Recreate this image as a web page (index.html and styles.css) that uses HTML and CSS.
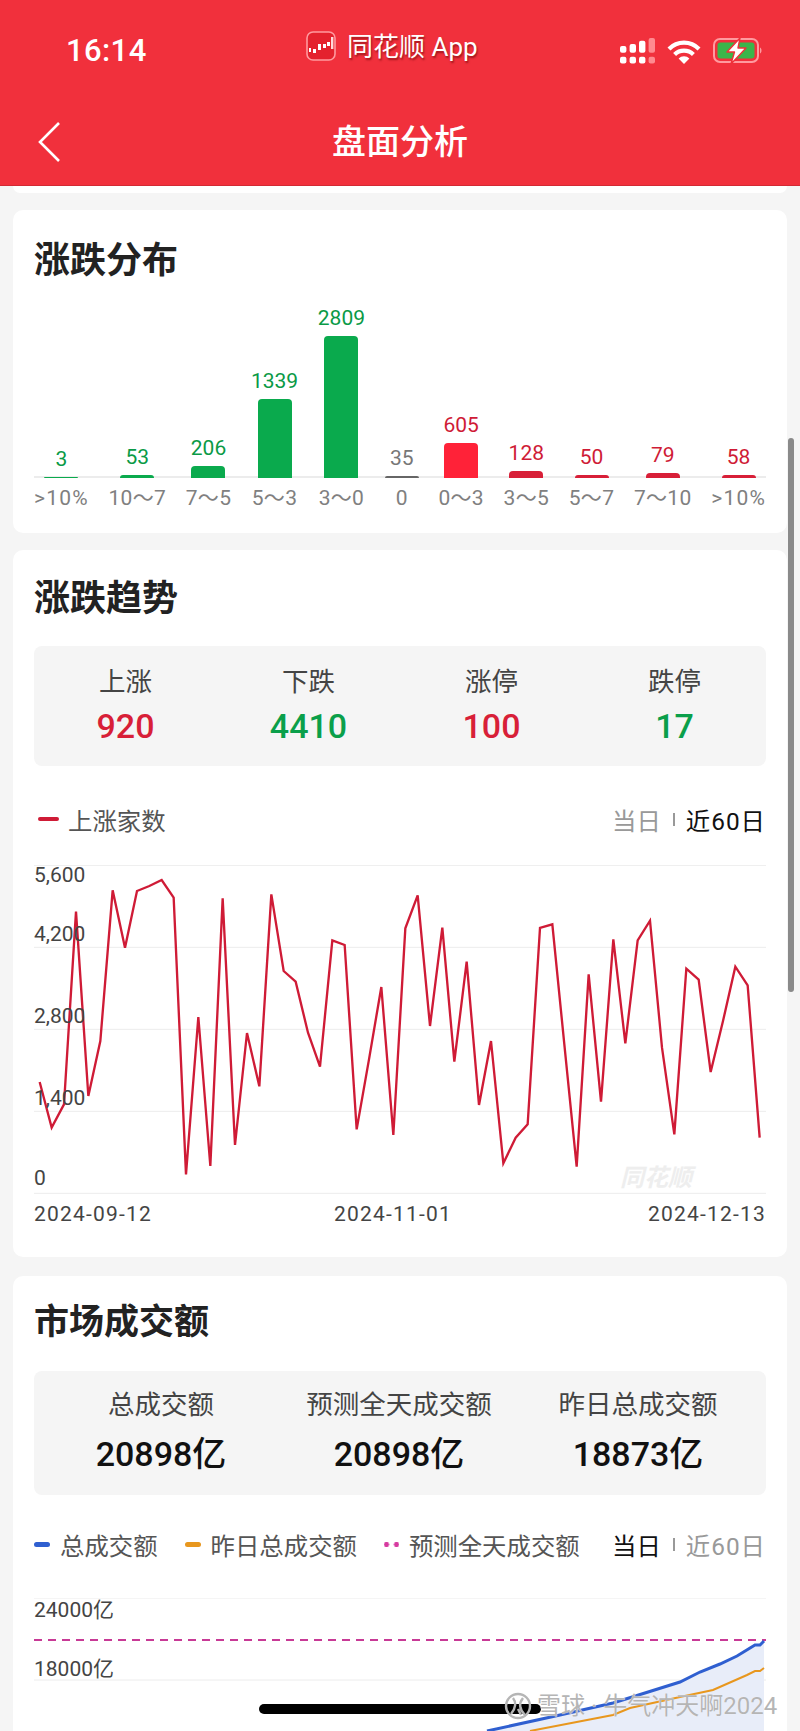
FILE: index.html
```html
<!DOCTYPE html>
<html lang="zh">
<head>
<meta charset="utf-8">
<title>盘面分析</title>
<link rel="stylesheet" href="styles.css">
</head>
<body>
<div class="phone">
  <header class="header">
    <div class="status">
      <div class="time">16:14</div>
      <div class="app">
        <svg class="app-icon" viewBox="0 0 30 30">
          <rect x="1" y="1" width="28" height="28" rx="6" fill="#e4222e" stroke="#ff9a9f" stroke-width="1.6"/>
          <g fill="#fff"><rect x="3" y="17" width="2" height="4"/><rect x="7" y="18" width="3" height="4"/><rect x="12" y="13" width="3" height="6"/><rect x="17" y="13" width="3" height="4"/><rect x="21" y="11" width="3" height="4"/></g>
          <rect x="25" y="6" width="2.4" height="12" fill="#ffd9da"/>
        </svg>
        <span class="app-name">同花顺 App</span>
      </div>
      <div class="status-icons">
        <svg class="signal" width="35" height="26" viewBox="0 0 35 26">
          <g fill="#fff">
            <rect x="0" y="8" width="6.4" height="6.8" rx="2"/><rect x="9.6" y="6" width="6.4" height="8.8" rx="2"/><rect x="19" y="2.7" width="6.4" height="12" rx="2"/>
            <rect x="0" y="18.7" width="6.4" height="6.8" rx="2"/><rect x="9.6" y="18.7" width="6.4" height="6.8" rx="2"/><rect x="19" y="18.7" width="6.4" height="6.8" rx="2"/>
          </g>
          <g fill="#ff8a90"><rect x="28.6" y="0" width="6.4" height="14.8" rx="2"/><rect x="28.6" y="18.7" width="6.4" height="6.8" rx="2"/></g>
        </svg>
        <svg class="wifi" width="34" height="25" viewBox="0 0 34 25">
          <g fill="none" stroke="#fff" stroke-width="4.2"><path d="M2 10A21 21 0 0 1 32 10"/><path d="M7.6 15.4A13.4 13.4 0 0 1 26.4 15.4"/></g>
          <path d="M11.6 19.4A7.6 7.6 0 0 1 22.4 19.4L17 25Z" fill="#fff"/>
        </svg>
        <svg class="battery" width="50" height="26" viewBox="0 0 50 26">
          <rect x="1" y="1" width="44" height="23" rx="6" fill="none" stroke="#ff9a9f" stroke-width="2"/>
          <rect x="4.5" y="4.5" width="37" height="16" rx="3" fill="#3bb54a"/>
          <path d="M47 9.5C49 10.5 49 14.5 47 15.5Z" fill="#ff9a9f"/>
          <path d="M27 0L14 14H21.5L18 26L33 10H25Z" fill="#fff" stroke="#ef3039" stroke-width="1.4" stroke-linejoin="round"/>
        </svg>
      </div>
    </div>
    <nav class="nav">
      <svg class="back" width="22" height="40" viewBox="0 0 22 40"><path d="M21 1L2 20L21 39" fill="none" stroke="#fff" stroke-width="2.6"/></svg>
      <h1 class="nav-title">盘面分析</h1>
    </nav>
  </header>

  <main class="content">
    <div class="stub"></div>

    <section class="card dist">
      <h2 class="card-title">涨跌分布</h2>
      <div class="bars">
        <div class="axis-line"></div>
        <div class="col green"><span class="num">3</span><i class="bar h1"></i><span class="tick tick-wide">&gt;10%</span></div>
        <div class="col green"><span class="num">53</span><i class="bar h3"></i><span class="tick">10～7</span></div>
        <div class="col green"><span class="num">206</span><i class="bar h12"></i><span class="tick">7～5</span></div>
        <div class="col green"><span class="num">1339</span><i class="bar h79"></i><span class="tick">5～3</span></div>
        <div class="col green"><span class="num">2809</span><i class="bar h142"></i><span class="tick">3～0</span></div>
        <div class="col grey"><span class="num">35</span><i class="bar h2"></i><span class="tick">0</span></div>
        <div class="col red"><span class="num">605</span><i class="bar h35"></i><span class="tick">0～3</span></div>
        <div class="col red"><span class="num">128</span><i class="bar h7"></i><span class="tick">3～5</span></div>
        <div class="col red"><span class="num">50</span><i class="bar h3"></i><span class="tick">5～7</span></div>
        <div class="col red"><span class="num">79</span><i class="bar h5"></i><span class="tick">7～10</span></div>
        <div class="col red"><span class="num">58</span><i class="bar h3"></i><span class="tick tick-wide">&gt;10%</span></div>
      </div>
    </section>

    <section class="card trend">
      <h2 class="card-title">涨跌趋势</h2>
      <div class="stats stats-four">
        <div class="stat"><span class="stat-label">上涨</span><span class="stat-value v-red">920</span></div>
        <div class="stat"><span class="stat-label">下跌</span><span class="stat-value v-green">4410</span></div>
        <div class="stat"><span class="stat-label">涨停</span><span class="stat-value v-red">100</span></div>
        <div class="stat"><span class="stat-label">跌停</span><span class="stat-value v-green">17</span></div>
      </div>
      <div class="legend legend-trend">
        <div class="legend-item"><i class="key key-red"></i>上涨家数</div>
        <div class="switch"><span class="off">当日</span><i class="sep"></i><span class="off-wide on">近60日</span></div>
      </div>
      <div class="chart">
        <svg class="plot" viewBox="102 42 2196 987" width="732" height="329">
          <g stroke="#ececec" stroke-width="3">
            <line x1="102" y1="43" x2="2298" y2="43"/><line x1="102" y1="289" x2="2298" y2="289"/><line x1="102" y1="535" x2="2298" y2="535"/><line x1="102" y1="781" x2="2298" y2="781"/><line x1="102" y1="1027" x2="2298" y2="1027"/>
          </g>
          <polyline fill="none" stroke="#cf1b36" stroke-width="7" stroke-linejoin="miter" points="119,693 155,830 192,760 228,182 265,735 301,570 338,118 375,290 411,120 448,105 485,87 521,140 558,970 595,498 631,945 668,142 705,882 741,546 778,706 814,130 851,360 887,392 924,545 960,647 997,268 1034,282 1070,835 1107,625 1144,408 1180,852 1216,232 1253,133 1290,525 1327,230 1363,632 1400,332 1437,762 1473,570 1510,937 1547,860 1583,820 1620,231 1657,220 1693,580 1730,947 1766,370 1803,752 1840,265 1876,577 1913,268 1950,209 1986,590 2023,850 2059,353 2096,386 2132,663 2169,510 2206,347 2243,403 2279,860"/>
        </svg>
        <div class="y-axis">
          <span class="y-top">5,600</span><span>4,200</span><span>2,800</span><span>1,400</span><span class="y-zero">0</span>
        </div>
        <div class="chart-mark">同花顺</div>
      </div>
      <div class="dates"><span>2024-09-12</span><span>2024-11-01</span><span>2024-12-13</span></div>
    </section>

    <section class="card volume">
      <h2 class="card-title card-title-small">市场成交额</h2>
      <div class="stats stats-three">
        <div class="stat"><span class="stat-label">总成交额</span><span class="stat-value">20898亿</span></div>
        <div class="stat"><span class="stat-label">预测全天成交额</span><span class="stat-value">20898亿</span></div>
        <div class="stat"><span class="stat-label">昨日总成交额</span><span class="stat-value">18873亿</span></div>
      </div>
      <div class="legend legend-volume">
        <div class="legend-item"><i class="key key-blue"></i>总成交额</div>
        <div class="legend-item"><i class="key key-orange"></i>昨日总成交额</div>
        <div class="legend-item"><i class="key key-dots"></i>预测全天成交额</div>
        <div class="switch"><span class="on">当日</span><i class="sep"></i><span class="off off-wide">近60日</span></div>
      </div>
      <div class="chart chart-volume">
        <svg class="plot" viewBox="34 1598 732 133" width="732" height="133">
          <g stroke="#ececec" stroke-width="1">
            <line x1="34" y1="1598" x2="766" y2="1598"/><line x1="34" y1="1680" x2="766" y2="1680"/>
          </g>
          <path d="M487 1731L560 1715L613 1703L680 1682L700 1672L720 1664L737 1656L755 1645L760 1645L764 1641V1731Z" fill="#e8edf9"/>
          <line x1="34" y1="1640" x2="766" y2="1640" stroke="#c83a96" stroke-width="2" stroke-dasharray="8 6"/>
          <polyline fill="none" stroke="#e8971e" stroke-width="2" points="530,1731 613,1715 630,1708 680,1697 713,1690 747,1675 755,1671 760,1671 764,1668"/>
          <polyline fill="none" stroke="#2f5fd0" stroke-width="3" points="487,1731 560,1715 613,1703 680,1682 700,1672 720,1664 737,1656 755,1645 760,1645 764,1641"/>
        </svg>
        <div class="y-axis y-volume"><span>24000亿</span><span>18000亿</span></div>
      </div>
    </section>
  </main>

  <div class="scrollbar"></div>
  <div class="home-bar"></div>
  <div class="watermark">
    <svg width="28" height="28" viewBox="0 0 28 28"><circle cx="14" cy="14" r="12" fill="none" stroke="#b5b5b5" stroke-width="2.4"/><path d="M9 6C13 11 11 17 7 22M19 6C15 11 15 17 21 23M14 17L17 23" fill="none" stroke="#b5b5b5" stroke-width="2.4"/></svg>
    <span>雪球 · 牛气冲天啊2024</span>
  </div>
</div>
</body>
</html>
```
FILE: styles.css
```css
* { box-sizing: border-box; }
html, body { margin: 0; padding: 0; background: #f5f5f5; }
body { font-family: Roboto, "Noto Sans CJK SC", sans-serif; color: #222; }
.phone { position: relative; width: 800px; height: 1731px; overflow: hidden; background: #f5f5f5; }

/* header */
.header { height: 186px; background: #f1303c; color: #fff; border-bottom: 1px solid #d22a34; }
.status { display: flex; align-items: center; height: 102px; padding-left: 66px; }
.time { width: 240px; font-size: 31px; font-weight: 500; line-height: 36px; letter-spacing: 0.4px; }
.app { display: flex; align-items: center; width: 314px; gap: 11px; margin-top: -9px; }
.app-icon { width: 30px; height: 30px; flex: none; margin-top: -2px; }
.app-name { font-size: 26px; line-height: 32px; text-shadow: 1px 2px 2px rgba(90, 0, 0, 0.55); }
.status-icons { display: flex; align-items: center; gap: 12px; }
.nav { display: grid; grid-template-columns: 1fr auto 1fr; align-items: center; height: 80px; padding: 0 38px; }
.back { display: block; }
.nav-title { margin: 0; font-size: 34px; font-weight: 500; line-height: 44px; }

/* cards */
.stub { height: 7px; margin: 0 13px; background: #fff; border-radius: 0 0 12px 12px; }
.card { margin: 17px 13px 0; padding-left: 21px; padding-right: 21px; background: #fff; border-radius: 10px; }
.card-title { margin: 0; font-size: 36px; font-weight: 700; line-height: 50px; color: #222; }
.card-title-small { font-size: 35px; }
.dist { height: 323px; padding-top: 26px; }
.trend { height: 707px; padding-top: 24px; }
.volume { margin-top: 19px; height: 600px; padding-top: 22px; }

/* distribution */
.bars { position: relative; display: flex; justify-content: space-between; align-items: flex-end; height: 224px; }
.axis-line { position: absolute; left: 0; right: 0; bottom: 32px; height: 2px; background: #ececec; }
.col { position: relative; display: flex; flex-direction: column; align-items: center; min-width: 34px; }
.num { font-size: 21px; line-height: 24px; margin-bottom: 6px; }
.tick { margin-top: 8px; font-size: 21px; line-height: 24px; color: #808080; white-space: nowrap; letter-spacing: 0.3px; }
.tick-wide { letter-spacing: 1.2px; }
.bar { display: block; width: 34px; border-radius: 4px 4px 0 0; }
.h1 { height: 1px; } .h2 { height: 2px; } .h3 { height: 3px; } .h5 { height: 5px; } .h7 { height: 7px; }
.h12 { height: 12px; } .h35 { height: 35px; } .h79 { height: 79px; } .h142 { height: 142px; }
.green .num { color: #0a9a46; } .green .bar { background: #0aaa4d; }
.red .num { color: #cf1b36; } .red .bar { background: #ff2238; }
.grey .num { color: #777; } .grey .bar { background: #666; }
.red .h3, .red .h5, .red .h7 { background: #d81f38; }

/* stat boxes */
.stats { display: grid; background: #f5f5f5; border-radius: 8px; text-align: center; }
.stats-four { grid-template-columns: repeat(4, 1fr); height: 120px; margin-top: 22px; padding-top: 21px; }
.stats-three { grid-template-columns: 254px 222px 256px; height: 124px; margin-top: 23px; padding-top: 19px; }
.stat { display: flex; flex-direction: column; align-items: center; }
.stat-label { font-size: 26.5px; line-height: 30px; color: #444; white-space: nowrap; }
.stat-value { margin-top: 7px; font-size: 34px; font-weight: 500; line-height: 44px; color: #111; white-space: nowrap; }
.stats-three .stat-value { margin-top: 12px; }
.v-red { color: #d81f38; } .v-green { color: #0a9f4a; }

/* legend */
.legend { display: flex; align-items: center; height: 30px; font-size: 24.4px; color: #555; white-space: nowrap; }
.legend-trend { justify-content: space-between; margin-top: 38px; margin-bottom: 31px; }
.legend-volume { margin-top: 34px; margin-bottom: 39px; }
.legend-item { display: flex; align-items: center; }
.legend-volume .legend-item { margin-right: 27px; }
.legend-trend .legend-item { margin-left: 4px; }
.key { display: block; margin-right: 10px; border-radius: 3px; }
.key-red { width: 21px; height: 4px; margin-right: 9px; background: #cf1b36; }
.key-blue { width: 16px; height: 5px; background: #2f5fd0; }
.key-orange { width: 16px; height: 5px; background: #e8971e; }
.key-dots { width: 15px; height: 5px; border-radius: 0; background: radial-gradient(circle, #d63a9f 2.4px, transparent 2.8px) -2.5px 0 / 10px 5px repeat-x; }
.switch { display: flex; align-items: center; margin-left: auto; }
.sep { display: block; width: 2px; height: 13px; margin: 0 11px 0 12px; background: #999; }
.off { color: #999; }
.on { color: #111; }
.off-wide { letter-spacing: 1px; }

/* line charts */
.chart { position: relative; height: 329px; }
.plot { display: block; }
.y-axis { position: absolute; left: 0; top: -2px; display: flex; flex-direction: column; gap: 58px; font-size: 21px; line-height: 24px; color: #444; }
.y-top { margin-bottom: -23px; }
.y-zero { margin-top: -2px; }
.chart-mark { position: absolute; right: 74px; top: 300px; font-size: 24px; line-height: 26px; font-style: italic; font-weight: 700; color: #eeeeee; }
.dates { display: grid; grid-template-columns: 300px 1fr auto; margin-top: 7px; font-size: 21px; line-height: 26px; color: #444; letter-spacing: 1.2px; }
.chart-volume { height: 133px; }
.y-volume { top: 0; gap: 35px; }

/* overlays */
.scrollbar { position: absolute; left: 788px; top: 438px; width: 6px; height: 554px; border-radius: 3px; background: #8a8a8a; }
.home-bar { position: absolute; left: 259px; top: 1704px; width: 282px; height: 10px; border-radius: 5px; background: #000; }
.watermark { position: absolute; left: 504px; top: 1692px; display: flex; align-items: center; gap: 5px; font-size: 24px; line-height: 28px; color: #b5b5b5; white-space: nowrap; text-shadow: 0 0 1px #fff; }
```
